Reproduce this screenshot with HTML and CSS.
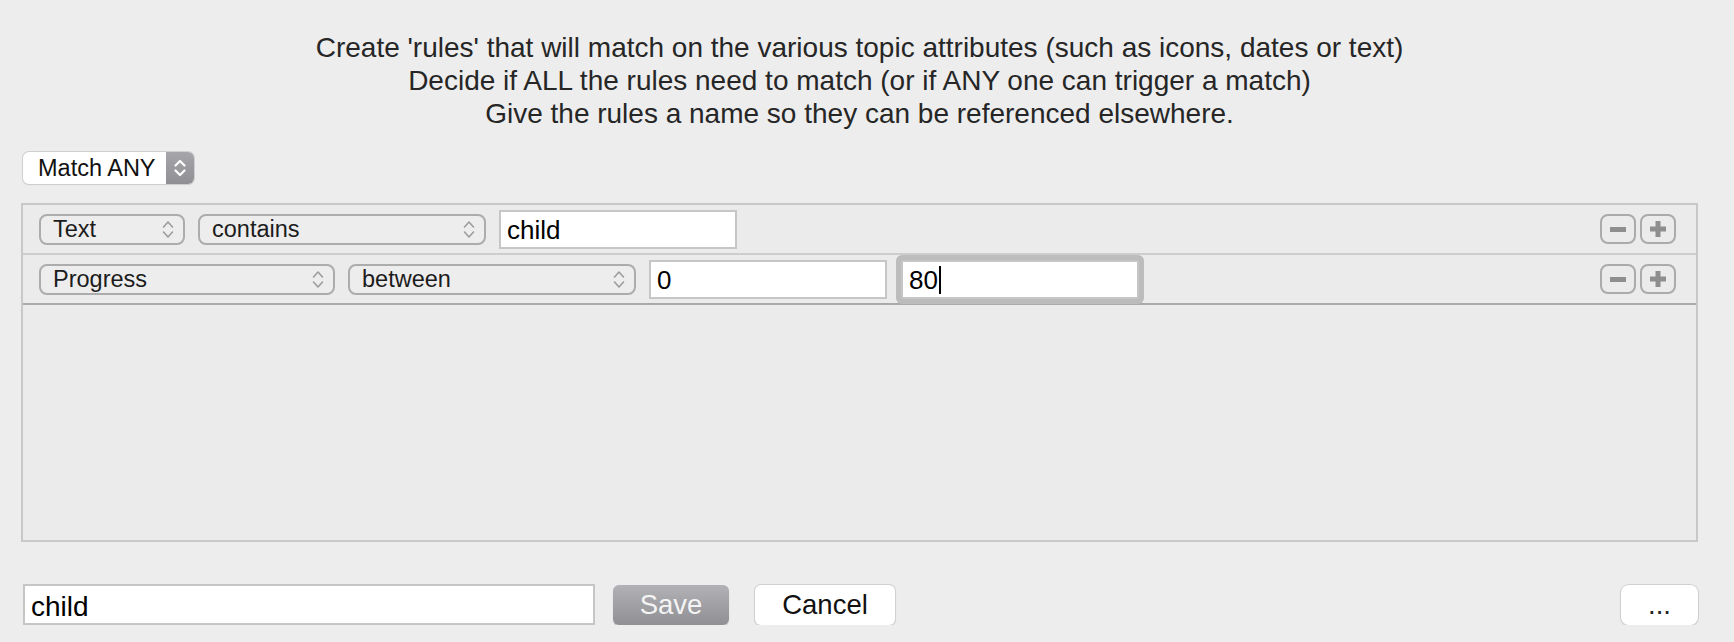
FILE: index.html
```html
<!DOCTYPE html>
<html lang="en">
<head>
  <meta charset="UTF-8" />
  <title>Rules</title>
  <link rel="stylesheet" href="styles.css">
</head>
<body>

<div class="page">
  <div class="intro">
    <p>Create 'rules' that will match on the various topic attributes (such as icons, dates or text)</p>
    <p>Decide if ALL the rules need to match (or if ANY one can trigger a match)</p>
    <p>Give the rules a name so they can be referenced elsewhere.</p>
  </div>

  <div class="match-row">
    <div class="match">
      <span class="match-label">Match ANY</span>
      <span class="match-arrows">
        <svg width="14" height="22" viewBox="0 0 14 22"><path d="M2.5 8.5 L7 4 L11.5 8.5 M2.5 13.5 L7 18 L11.5 13.5" fill="none" stroke="#fff" stroke-width="2.2" stroke-linecap="round" stroke-linejoin="round"/></svg>
      </span>
    </div>
  </div>

  <div class="rules">
    <div class="rule">
      <div class="popup w-text">Text<svg class="chev" width="12" height="19" viewBox="0 0 12 19"><path d="M1.5 7 L6 2 L10.5 7 M1.5 12 L6 17 L10.5 12" fill="none" stroke="#9c9c9c" stroke-width="1.6" stroke-linecap="round" stroke-linejoin="round"/></svg></div>
      <div class="popup w-op">contains<svg class="chev" width="12" height="19" viewBox="0 0 12 19"><path d="M1.5 7 L6 2 L10.5 7 M1.5 12 L6 17 L10.5 12" fill="none" stroke="#9c9c9c" stroke-width="1.6" stroke-linecap="round" stroke-linejoin="round"/></svg></div>
      <div class="field">child</div>
      <div class="spacer"></div>
      <div class="pm">
        <svg width="16" height="5" viewBox="0 0 16 5"><rect width="16" height="5" fill="#8e8e8e"/></svg>
      </div>
      <div class="pm">
        <svg width="16" height="16" viewBox="0 0 16 16"><rect y="5.5" width="16" height="5" fill="#8e8e8e"/><rect x="5.5" width="5" height="16" fill="#8e8e8e"/></svg>
      </div>
    </div>

    <div class="rule last">
      <div class="popup w-attr">Progress<svg class="chev" width="12" height="19" viewBox="0 0 12 19"><path d="M1.5 7 L6 2 L10.5 7 M1.5 12 L6 17 L10.5 12" fill="none" stroke="#9c9c9c" stroke-width="1.6" stroke-linecap="round" stroke-linejoin="round"/></svg></div>
      <div class="popup w-op">between<svg class="chev" width="12" height="19" viewBox="0 0 12 19"><path d="M1.5 7 L6 2 L10.5 7 M1.5 12 L6 17 L10.5 12" fill="none" stroke="#9c9c9c" stroke-width="1.6" stroke-linecap="round" stroke-linejoin="round"/></svg></div>
      <div class="field">0</div>
      <div class="field focused">80<span class="caret"></span></div>
      <div class="spacer"></div>
      <div class="pm">
        <svg width="16" height="5" viewBox="0 0 16 5"><rect width="16" height="5" fill="#8e8e8e"/></svg>
      </div>
      <div class="pm">
        <svg width="16" height="16" viewBox="0 0 16 16"><rect y="5.5" width="16" height="5" fill="#8e8e8e"/><rect x="5.5" width="5" height="16" fill="#8e8e8e"/></svg>
      </div>
    </div>
  </div>

  <div class="footer">
    <div class="field name">child</div>
    <button class="btn save">Save</button>
    <button class="btn cancel">Cancel</button>
    <div class="spacer"></div>
    <button class="btn more">...</button>
  </div>
</div>

</body>
</html>
```

FILE: styles.css
```css
body {
  margin: 0;
  background: #ededed;
  color: #262626;
  font-family: "Liberation Sans", Arial, sans-serif;
}
.page {
  padding: 31px 36px 0 21px;
}
.intro {
  text-align: center;
  font-size: 28px;
  line-height: 33px;
}
.intro p {
  margin: 0;
}
.match-row {
  margin-top: 22px;
  padding-left: 2px;
  display: flex;
}
.match {
  display: flex;
  height: 32px;
  border-radius: 6px;
  background: #fff;
  box-shadow: 0 0 0 1px #cfcfcf, 0 1px 1px rgba(0,0,0,0.15);
  overflow: hidden;
  font-size: 23.5px;
  color: #111;
}
.match-label {
  display: flex;
  align-items: center;
  padding: 0 10px 0 15px;
}
.match-arrows {
  width: 28px;
  display: flex;
  align-items: center;
  justify-content: center;
  background: linear-gradient(#a5a5aa, #8f8f94);
}
.rules {
  margin-top: 19px;
  height: 335px;
  border: 2px solid #c8c8c8;
  background: #ebebeb;
}
.rule {
  display: flex;
  align-items: center;
  height: 48px;
  padding: 0 20px 0 16px;
  gap: 13px;
  border-bottom: 2px solid #cdcdcd;
}
.rule.last {
  border-bottom-color: #a9a9a9;
}
.popup {
  box-sizing: border-box;
  height: 31px;
  display: flex;
  align-items: center;
  justify-content: space-between;
  padding: 0 9px 0 12px;
  border: 2px solid #acacac;
  border-radius: 8px;
  background: #ededed;
  font-size: 23.5px;
  color: #1c1c1c;
}
.w-text { width: 146px; }
.w-op { width: 288px; }
.w-attr { width: 296px; }
.field {
  box-sizing: border-box;
  width: 238px;
  height: 39px;
  display: flex;
  align-items: center;
  padding: 2px 0 0 6px;
  background: #fff;
  border: 2px solid #c6c6c6;
  font-size: 26px;
  color: #000;
}
.field.focused {
  margin-left: 1px;
  box-shadow: 0 0 0 5px #bcbcbc;
  border-radius: 2px;
}
.caret {
  display: inline-block;
  width: 2px;
  height: 28px;
  background: #000;
  margin-left: 1px;
}
.spacer {
  flex: 1;
}
.pm {
  box-sizing: border-box;
  width: 36px;
  height: 30px;
  margin-left: -9px;
  display: flex;
  align-items: center;
  justify-content: center;
  border: 2px solid #ababab;
  border-radius: 8px;
}
.footer {
  display: flex;
  align-items: center;
  margin-top: 42px;
  padding-left: 2px;
}
.field.name {
  width: 572px;
  height: 41px;
  font-size: 28px;
  padding-top: 4px;
}
.btn {
  height: 40px;
  border: none;
  border-radius: 6px;
  font-family: "Liberation Sans", Arial, sans-serif;
  font-size: 27.5px;
  padding: 0;
}
.save {
  width: 116px;
  margin-left: 18px;
  background: linear-gradient(#b1b1b6, #8f8f94);
  color: #f4f4f4;
  box-shadow: 0 1px 1px rgba(0,0,0,0.2);
}
.cancel {
  width: 140px;
  margin-left: 26px;
  background: #fff;
  color: #111;
  box-shadow: 0 0 0 1px #d0d0d0, 0 1px 2px rgba(0,0,0,0.2);
}
.more {
  width: 77px;
  border-radius: 8px;
  background: #fff;
  color: #222;
  box-shadow: 0 0 0 1px #d0d0d0, 0 1px 2px rgba(0,0,0,0.2);
}
```
